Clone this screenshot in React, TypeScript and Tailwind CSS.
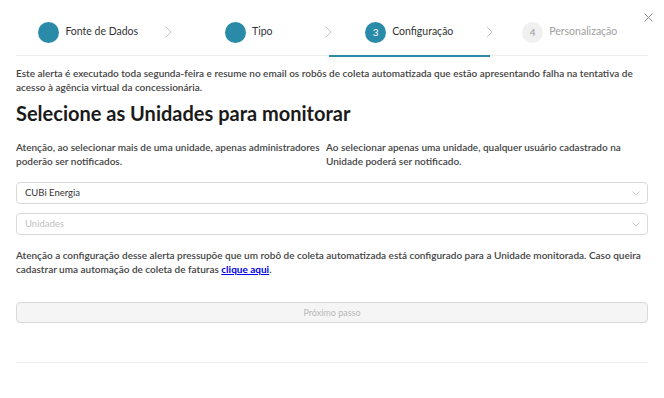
import React from "react";

const font = { fontFamily: "Lato, 'Open Sans', sans-serif" };

function Chevron() {
  return (
    <svg width="7" height="12" viewBox="0 0 7 12" className="absolute right-[-3px] top-[19px]">
      <path d="M1 1 L6 6 L1 11" fill="none" stroke="#c8c8c8" strokeWidth="1" />
    </svg>
  );
}

function Step({ n, label, state, last }: { n: number; label: string; state: "done" | "active" | "wait"; last?: boolean }) {
  return (
    <div className={`relative flex-1 flex justify-center items-center h-[50px] ${state === "active" ? "border-b-2 border-[#2a8ba8]" : ""}`}>
      <div className={`flex items-center gap-[6px] ${state === "active" ? "mt-[2px]" : ""}`}>
        <div
          className={`w-[21px] h-[21px] rounded-full flex items-center justify-center text-[10px] ${
            state === "wait" ? "bg-[#f0f0f0] text-[#9a9a9a]" : "bg-[#2a8ba8] text-white"
          }`}
        >
          {state === "done" ? "" : n}
        </div>
        <span className={`text-[10.5px] ${state === "wait" ? "text-[#a0a0a0]" : "text-[#333]"}`}>{label}</span>
      </div>
      {!last && <Chevron />}
    </div>
  );
}

function Select({ value, placeholder }: { value?: string; placeholder?: string }) {
  return (
    <div className="h-[22px] border border-[#d9d9d9] rounded-[4px] flex items-center justify-between pl-[8px] pr-[7px] bg-white">
      <span className={`text-[9.5px] ${value ? "text-[#333]" : "text-[#c0c0c0]"}`}>{value ?? placeholder}</span>
      <svg width="8" height="5" viewBox="0 0 8 5">
        <path d="M0.5 0.5 L4 4 L7.5 0.5" fill="none" stroke="#c4c4c4" strokeWidth="0.8" />
      </svg>
    </div>
  );
}

export default function App() {
  return (
    <div className="w-[664px] h-[398px] bg-white relative overflow-hidden" style={font}>
      <svg width="9" height="9" viewBox="0 0 9 9" className="absolute left-[644px] top-[13px]">
        <path d="M0.5 0.5 L8.5 8.5 M8.5 0.5 L0.5 8.5" stroke="#8c8c8c" strokeWidth="1" />
      </svg>
      <div className="pl-[8px] pr-[14px] pt-[7px]">
        <div className="flex">
          <Step n={1} label="Fonte de Dados" state="done" />
          <Step n={2} label="Tipo" state="done" />
          <Step n={3} label="Configuração" state="active" />
          <Step n={4} label="Personalização" state="wait" last />
        </div>
      </div>
      <div className="mx-[16px] border-t border-[#ececec] mt-[-2px]" />
      <div className="px-[16px] pt-[10px]">
        <p className="text-[10px] leading-[14px] font-semibold text-[#444]">
          Este alerta é executado toda segunda-feira e resume no email os robôs de coleta automatizada que estão apresentando falha na tentativa de acesso à agência virtual da concessionária.
        </p>
        <h1 className="text-[20px] font-bold text-[#1a1a1a] mt-[5px] leading-[28px]">Selecione as Unidades para monitorar</h1>
        <div className="grid grid-cols-[310px_1fr] mt-[13px] text-[10px] leading-[14px] font-semibold text-[#444]">
          <p className="pr-[4px]">Atenção, ao selecionar mais de uma unidade, apenas administradores poderão ser notificados.</p>
          <p>Ao selecionar apenas uma unidade, qualquer usuário cadastrado na Unidade poderá ser notificado.</p>
        </div>
        <div className="mt-[14px] flex flex-col gap-[9px]">
          <Select value="CUBi Energia" />
          <Select placeholder="Unidades" />
        </div>
        <p className="mt-[13px] text-[10px] leading-[14px] font-semibold text-[#444]">
          Atenção a configuração desse alerta pressupõe que um robô de coleta automatizada está configurado para a Unidade monitorada. Caso queira cadastrar uma automação de coleta de faturas{" "}
          <span className="text-[#0000ee] underline font-bold">clique aqui</span>.
        </p>
        <div className="mt-[26px] h-[21px] border border-[#d9d9d9] rounded-[4px] bg-[#f5f5f5] flex items-center justify-center text-[9px] text-[#b8b8b8]">
          Próximo passo
        </div>
        <div className="mt-[39px] border-t border-[#f0f0f0]" />
      </div>
    </div>
  );
}
